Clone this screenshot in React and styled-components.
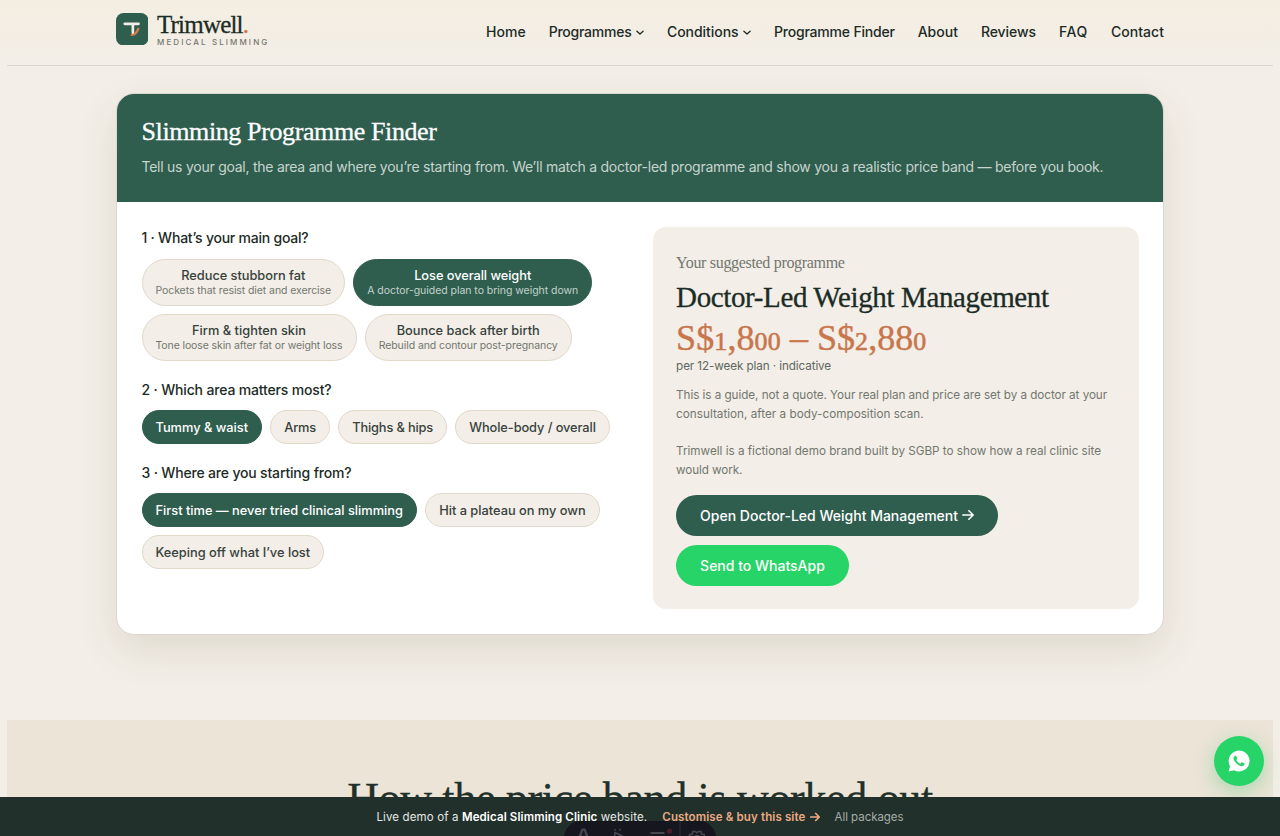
import React, { useState } from 'react'
import styled, { createGlobalStyle, css } from 'styled-components'

const sans = '"Inter", "Liberation Sans", sans-serif'
const serif = '"Liberation Serif", serif'

// styles
const GlobalStyle = createGlobalStyle`
  * {
    box-sizing: border-box;
  }

  body {
    margin: 0;
    background: #f3eee7;
    color: #1c2b26;
    font-family: ${sans};
    overflow: hidden;
  }

  h1, h2, h3, p {
    margin: 0;
    font-weight: 400;
  }

  button {
    font-family: inherit;
    cursor: pointer;
  }
`

// letter spacing changes from one text to the next
const track = css`
  letter-spacing: ${({ $track }) => $track || 0}px;
`

const Page = styled.div`
  height: 836px;
  overflow: hidden;
`

const Header = styled.header`
  background: linear-gradient(#f4eee2, #f3eee7);
`

const HeaderInner = styled.div`
  display: flex;
  align-items: center;
  justify-content: space-between;
  height: 66px;
  margin: 0 7px;
  padding: 0 109px 0 108.5px;
  border-bottom: 1px solid #dcd8d0;
`

const Brand = styled.a`
  display: flex;
  gap: 9px;
  padding-bottom: 6px;
`

const BrandText = styled.div`
  display: flex;
  flex-direction: column;
`

const BrandName = styled.span`
  height: 24px;
  color: #1b2c26;
  font: 400 25px/23px ${serif};
  letter-spacing: -0.8px;
  -webkit-text-stroke: 0.3px currentColor;

  b {
    color: #d3703f;
    font-weight: 400;
  }
`

const BrandTag = styled.span`
  color: #74776f;
  font-size: 8px;
  font-weight: 500;
  line-height: 10px;
  letter-spacing: 2.1px;
`

const Nav = styled.nav`
  display: flex;
  align-items: center;
  gap: 23px;
  padding-bottom: 2px;
`

const NavLink = styled.a`
  display: flex;
  align-items: center;
  gap: 4.5px;
  color: #1c2b26;
  font-size: 14px;
  font-weight: 500;
  line-height: 20px;
  white-space: nowrap;
  ${track}
`

const Card = styled.section`
  width: 1048px;
  margin: 27px auto 85px;
  border: 1px solid #dcd8ca;
  border-radius: 18px;
  background: #fff;
  box-shadow: 0 16px 40px rgba(70, 60, 30, 0.11);
  overflow: hidden;
`

const CardHead = styled.div`
  height: 108px;
  padding: 23px 24.5px 0;
  background: #2f5e4f;
`

const CardTitle = styled.h1`
  color: #fff;
  font: 400 26px/30px ${serif};
  letter-spacing: -0.39px;
  -webkit-text-stroke: 0.3px currentColor;
`

const CardLead = styled.p`
  margin-top: 10px;
  color: #c6d4cd;
  font-size: 14px;
  line-height: 20px;
  letter-spacing: -0.252px;
  white-space: nowrap;
`

const CardBody = styled.div`
  display: grid;
  grid-template-columns: 1fr 1fr;
  gap: 25px;
  padding: 25px 24.5px;
`

const Questions = styled.div`
  display: flex;
  flex-direction: column;
  gap: 19px;
  padding-top: 1px;
`

const Label = styled.h3`
  margin-bottom: 10.5px;
  color: #1c2b26;
  font-size: 14px;
  font-weight: 500;
  line-height: 20px;
  ${track}
`

const Chips = styled.div`
  display: flex;
  flex-wrap: wrap;
  gap: 8.2px;
`

const Chip = styled.button`
  display: flex;
  flex-direction: column;
  align-items: center;
  justify-content: center;
  height: ${({ $tall }) => ($tall ? 47 : 33.7)}px;
  padding: ${({ $tall }) => ($tall ? 2 : 1.5)}px 13px 0;
  border: 1px solid ${({ $active }) => ($active ? '#2f5e4f' : '#e0d8c9')};
  border-radius: 24px;
  background: ${({ $active }) => ($active ? '#2f5e4f' : '#f3eee7')};
  color: ${({ $active }) => ($active ? '#fff' : '#37423c')};
  font-size: 12.8px;
  font-weight: 500;
  line-height: 16px;
  white-space: nowrap;
  ${track}
`

const Hint = styled.small`
  color: ${({ $active }) => ($active ? '#c3d2cb' : '#72776f')};
  font-size: 10.5px;
  font-weight: 400;
  line-height: 14px;
  ${track}
`

const Result = styled.div`
  padding: 25.5px 23px 23px 23.6px;
  border-radius: 13px;
  background: #f3eee7;
`

const Eyebrow = styled.p`
  color: #72776f;
  font: 400 16px/20px ${serif};
  letter-spacing: -0.318px;
`

const ResultTitle = styled.h2`
  margin-top: 7.5px;
  color: #1b2c26;
  font: 400 29px/34px ${serif};
  letter-spacing: -0.378px;
  -webkit-text-stroke: 0.3px currentColor;
`

const Price = styled.p`
  height: 40px;
  margin-top: 4px;
  color: #c8764c;
  font: 400 36px/40px ${serif};
  -webkit-text-stroke: 0.4px currentColor;
`

// old-style figures: 0, 1 and 2 only reach the x-height
const LowFigure = styled.span`
  font-size: 0.72em;
  line-height: 1;
  letter-spacing: 0.3px;
  -webkit-text-stroke-width: 0.6px;
`

const Unit = styled.p`
  color: #60675f;
  font-size: 11.7px;
  line-height: 16px;
  letter-spacing: -0.1px;
`

const Notes = styled.div`
  display: flex;
  flex-direction: column;
  gap: 18.7px;
  margin: 12px 0 15.6px;
`

const Note = styled.p`
  color: #72776f;
  font-size: 11.7px;
  line-height: 18.7px;
`

const NoteLine = styled.span`
  display: block;
  white-space: nowrap;
  ${track}
`

const Actions = styled.div`
  display: flex;
  flex-direction: column;
  align-items: flex-start;
  gap: 9.2px;
`

const Action = styled.button`
  display: flex;
  align-items: center;
  gap: 4px;
  height: 40.7px;
  padding: 0 24px;
  border: 0;
  border-radius: 21px;
  background: ${({ $green }) => ($green ? '#27d467' : '#2f5e4f')};
  color: #fff;
  font-size: 14px;
  font-weight: 500;
`

const Explain = styled.section`
  height: 200px;
  margin: 0 7px;
  padding-top: 54px;
  background: #ece4d7;
  text-align: center;
`

const ExplainTitle = styled.h2`
  color: #1f302a;
  font: 400 44px/50px ${serif};
  letter-spacing: -0.33px;
  -webkit-text-stroke: 0.3px currentColor;
`

const DemoBar = styled.div`
  position: fixed;
  left: 0;
  right: 0;
  bottom: 0;
  display: flex;
  justify-content: center;
  align-items: flex-start;
  gap: 15px;
  height: 39px;
  padding-top: 10.5px;
  background: #21302b;
  color: #e6e8e4;
  font-size: 11.5px;
  line-height: 18px;
  letter-spacing: 0.13px;
  white-space: nowrap;

  b {
    color: #fff;
    font-weight: 600;
  }
`

const BuyLink = styled.a`
  display: flex;
  align-items: center;
  gap: 4px;
  color: #eba982;
  font-weight: 600;
`

const PackagesLink = styled.a`
  color: #a5ada8;
  letter-spacing: -0.04px;
`

const WhatsAppButton = styled.a`
  position: fixed;
  top: 736px;
  right: 16px;
  display: flex;
  align-items: center;
  justify-content: center;
  width: 50px;
  height: 50px;
  border-radius: 50%;
  background: #27d467;
  box-shadow: 0 6px 20px rgba(39, 190, 95, 0.35);
`

const DevTools = styled.div`
  position: fixed;
  top: 821px;
  left: 564px;
  display: flex;
  align-items: center;
  width: 152px;
  height: 34px;
  border-radius: 17px;
  background: #15161e;
  overflow: hidden;
`

const ArrowIcon = ({ size = 11, weight = 1.5 }) => (
  <svg width={size} height={size} viewBox="0 0 11 11" fill="none" stroke="currentColor" strokeWidth={weight} strokeLinecap="round" strokeLinejoin="round">
    <path d="M.8 5.5h9.2M6.3 1.6l3.9 3.9-3.9 3.9" />
  </svg>
)

const ChevronIcon = () => (
  <svg width="8" height="8" viewBox="0 0 8 8" fill="none" stroke="currentColor" strokeWidth="1.3" strokeLinecap="round" strokeLinejoin="round">
    <path d="M.9 3.2 4 6l3.1-2.8" />
  </svg>
)

const LogoIcon = () => (
  <svg width="32.5" height="32.5" viewBox="0 0 32 32">
    <rect width="32" height="32" rx="7.5" fill="#2f5e4f" />
    <path d="M14.6 21.3c3.8.6 6.9-2.2 7.4-6.6" fill="none" stroke="#d9794a" strokeWidth="2.4" />
    <path d="M8.6 10.7h13.6M16.6 10.7v8.6" fill="none" stroke="#f3eee7" strokeWidth="2.6" strokeLinecap="round" />
  </svg>
)

const WhatsAppIcon = () => (
  <svg width="22" height="22" viewBox="0 0 24 24">
    <path fill="#fff" d="M.6 23.5 2.2 17.6A11.4 11.4 0 1 1 6.7 22Z" />
    <path
      fill="#27d467"
      d="M17.472 14.382c-.297-.149-1.758-.867-2.03-.967-.273-.099-.471-.148-.67.15-.197.297-.767.966-.94 1.164-.173.199-.347.223-.644.075-.297-.15-1.255-.463-2.39-1.475-.883-.788-1.48-1.761-1.653-2.059-.173-.297-.018-.458.13-.606.134-.133.298-.347.446-.52.149-.174.198-.298.298-.497.099-.198.05-.371-.025-.52-.075-.149-.669-1.612-.916-2.207-.242-.579-.487-.5-.669-.51-.173-.008-.371-.01-.57-.01-.198 0-.52.074-.792.372-.272.297-1.04 1.016-1.04 2.479 0 1.462 1.065 2.875 1.213 3.074.149.198 2.096 3.2 5.077 4.487.709.306 1.262.489 1.694.625.712.227 1.36.195 1.871.118.571-.085 1.758-.719 2.006-1.413.248-.694.248-1.289.173-1.413-.074-.124-.272-.198-.57-.347"
    />
  </svg>
)

const DevToolsIcons = () => (
  <svg width="152" height="34" viewBox="0 0 152 34" fill="none" stroke="#454650" strokeWidth="1.6">
    <path d="M14 20 18.4 8.6h2.2L25 20M16 16h7" strokeWidth="2.4" />
    <path d="m50 21 1-9.5L62 17l-5 2-2 5Z M51 9.5v-1.5M55.5 9.5 56.5 8" />
    <path d="M86.5 12h14M86.5 17h12" strokeWidth="2" />
    <circle cx="105.5" cy="10" r="2.6" fill="#4d1c2c" stroke="none" />
    <path d="M116 0v34" stroke="#2c2d36" strokeWidth="1" />
    <path d="M125.5 16.5v-2.8l2.8-.7.4-2.5h2.6l1.6 1.3 1.6-1.3h2.6l.4 2.5 2.8.7v2.8" />
    <circle cx="133" cy="17.5" r="3" />
  </svg>
)

// data
const links = [
  { text: 'Home', track: 0 },
  { text: 'Programmes', track: -0.24, menu: true },
  { text: 'Conditions', track: -0.05, menu: true },
  { text: 'Programme Finder', track: -0.2 },
  { text: 'About', track: 0 },
  { text: 'Reviews', track: -0.08 },
  { text: 'FAQ', track: 0.6 },
  { text: 'Contact', track: 0.05 }
]

const questions = [
  {
    label: '1 · What’s your main goal?',
    track: -0.226,
    options: [
      { text: 'Reduce stubborn fat', hint: 'Pockets that resist diet and exercise', track: -0.03, hintTrack: -0.087 },
      { text: 'Lose overall weight', hint: 'A doctor-guided plan to bring weight down', track: -0.055, hintTrack: -0.043 },
      { text: 'Firm & tighten skin', hint: 'Tone loose skin after fat or weight loss', track: 0.03, hintTrack: -0.108 },
      { text: 'Bounce back after birth', hint: 'Rebuild and contour post-pregnancy', track: -0.01, hintTrack: -0.078 }
    ]
  },
  {
    label: '2 · Which area matters most?',
    track: -0.164,
    options: [
      { text: 'Tummy & waist' },
      { text: 'Arms', track: -0.15 },
      { text: 'Thighs & hips', track: -0.15 },
      { text: 'Whole-body / overall', track: -0.08 }
    ]
  },
  {
    label: '3 · Where are you starting from?',
    track: -0.174,
    options: [
      { text: 'First time — never tried clinical slimming', track: 0.01 },
      { text: 'Hit a plateau on my own' },
      { text: 'Keeping off what I’ve lost' }
    ]
  }
]

const renderPrice = (price) =>
  price.split('').map((char, i) => ('012'.includes(char) ? <LowFigure key={i}>{char}</LowFigure> : char))

const App = () => {
  const [answers, setAnswers] = useState([1, 0, 0])

  const handleSelect = (question, option) => {
    setAnswers(answers.map((answer, i) => (i === question ? option : answer)))
  }

  return (
    <Page>
      <GlobalStyle />
      <Header>
        <HeaderInner>
          <Brand>
            <LogoIcon />
            <BrandText>
              <BrandName>Trimwell<b>.</b></BrandName>
              <BrandTag>MEDICAL SLIMMING</BrandTag>
            </BrandText>
          </Brand>
          <Nav>
            {links.map(({ text, track, menu }) => (
              <NavLink key={text} $track={track}>
                {text}
                {menu && <ChevronIcon />}
              </NavLink>
            ))}
          </Nav>
        </HeaderInner>
      </Header>

      <Card>
        <CardHead>
          <CardTitle>Slimming Programme Finder</CardTitle>
          <CardLead>
            Tell us your goal, the area and where you’re starting from. We’ll match a doctor-led programme and show you a realistic price band — before you book.
          </CardLead>
        </CardHead>
        <CardBody>
          <Questions>
            {questions.map(({ label, track, options }, q) => (
              <div key={label}>
                <Label $track={track}>{label}</Label>
                <Chips>
                  {options.map((option, o) => {
                    const active = answers[q] === o
                    return (
                      <Chip
                        key={option.text}
                        $active={active}
                        $tall={Boolean(option.hint)}
                        $track={option.track}
                        onClick={() => handleSelect(q, o)}
                      >
                        {option.text}
                        {option.hint && <Hint $active={active} $track={option.hintTrack}>{option.hint}</Hint>}
                      </Chip>
                    )
                  })}
                </Chips>
              </div>
            ))}
          </Questions>

          <Result>
            <Eyebrow>Your suggested programme</Eyebrow>
            <ResultTitle>Doctor-Led Weight Management</ResultTitle>
            <Price>{renderPrice('S$1,800 – S$2,880')}</Price>
            <Unit>per 12-week plan · indicative</Unit>
            <Notes>
              <Note>
                <NoteLine $track={-0.051}>This is a guide, not a quote. Your real plan and price are set by a doctor at your</NoteLine>
                <NoteLine $track={0.023}>consultation, after a body-composition scan.</NoteLine>
              </Note>
              <Note>
                <NoteLine $track={-0.01}>Trimwell is a fictional demo brand built by SGBP to show how a real clinic site</NoteLine>
                <NoteLine $track={-0.1}>would work.</NoteLine>
              </Note>
            </Notes>
            <Actions>
              <Action>Open Doctor-Led Weight Management <ArrowIcon size={12} /></Action>
              <Action $green>Send to WhatsApp</Action>
            </Actions>
          </Result>
        </CardBody>
      </Card>

      <Explain>
        <ExplainTitle>How the price band is worked out</ExplainTitle>
      </Explain>

      <WhatsAppButton>
        <WhatsAppIcon />
      </WhatsAppButton>

      <DemoBar>
        <span>Live demo of a <b>Medical Slimming Clinic</b> website.</span>
        <BuyLink>Customise & buy this site <ArrowIcon size={10} weight={1.8} /></BuyLink>
        <PackagesLink>All packages</PackagesLink>
      </DemoBar>

      <DevTools>
        <DevToolsIcons />
      </DevTools>
    </Page>
  )
}

export default App
